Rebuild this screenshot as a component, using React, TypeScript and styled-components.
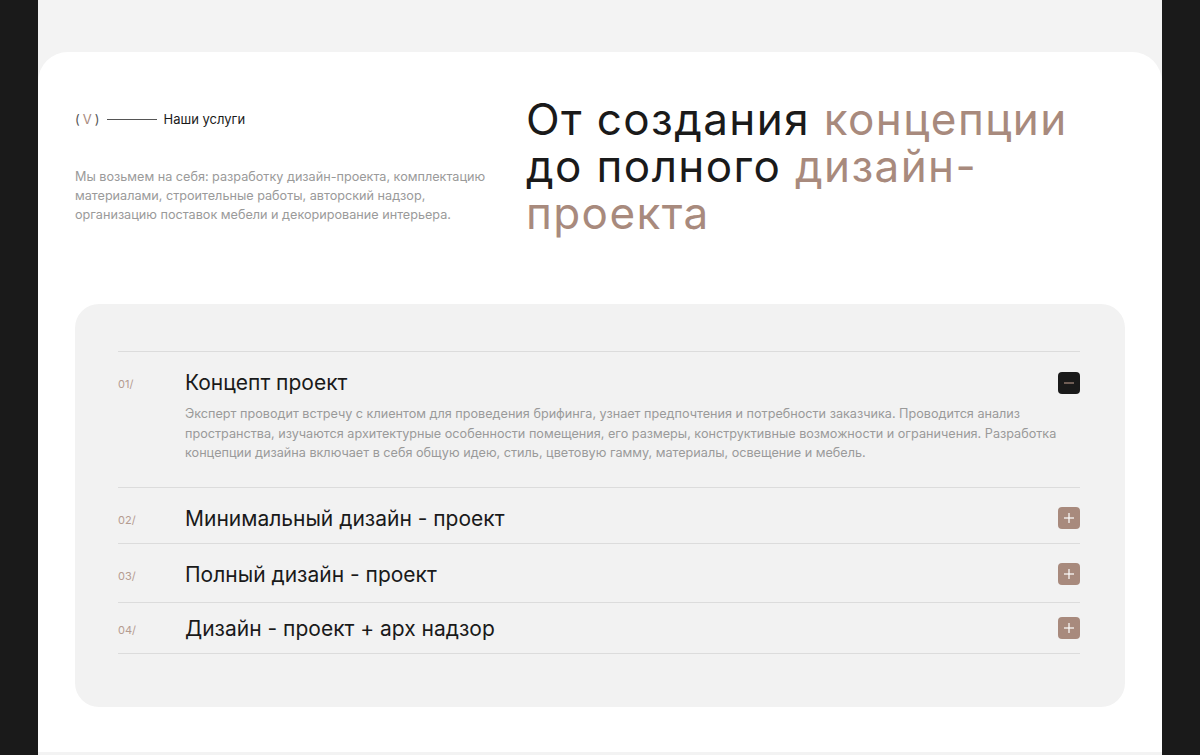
import styled, { createGlobalStyle } from 'styled-components';

const GlobalStyle = createGlobalStyle`
  * { box-sizing: border-box; }
  html, body {
    margin: 0;
    background: #1a1a1a;
    font-family: Inter, "Noto Sans", "Liberation Sans", sans-serif;
    -webkit-font-smoothing: antialiased;
  }
`;

const accent = '#a88a7d';

const Frame = styled.div`
  width: 1124px;
  height: 755px;
  margin: 0 auto;
  padding-top: 52px;
  background: #f3f3f3;
  overflow: hidden;
`;

const Card = styled.section`
  background: #ffffff;
  border-radius: 30px 30px 0 0;
  padding: 44px 37px 0;
  height: 700px;
`;

const Intro = styled.div`
  display: grid;
  grid-template-columns: 451px 1fr;
`;

const LeftCol = styled.div`
  padding-top: 15px;
`;

const Label = styled.div`
  display: flex;
  align-items: center;
  font-size: 13px;
  color: #1a1a1a;
`;

const Mark = styled.span`
  color: #555;
  letter-spacing: 3px;
  span {
    color: ${accent};
  }
`;

const Rule = styled.span`
  width: 50px;
  height: 1px;
  background: #555;
  margin: 0 6px 0 5px;
`;

const Lead = styled.p`
  margin: 40px 0 0;
  white-space: nowrap;
  font-size: 12.65px;
  line-height: 19px;
  color: #9a9a9a;
`;

const Heading = styled.h2`
  margin: 0;
  font-size: 44px;
  font-weight: 400;
  line-height: 47px;
  letter-spacing: 1.4px;
  color: #1a1a1a;
  span {
    color: ${accent};
  }
`;

const Panel = styled.div`
  margin-top: 67px;
  background: #f2f2f2;
  border-radius: 24px;
  padding: 47px 45px 53px 43px;
`;

const Item = styled.div<{ $pad: string }>`
  display: grid;
  grid-template-columns: 67px 1fr 22px;
  align-items: center;
  border-top: 1px solid #dcdcdc;
  padding: ${(p) => p.$pad};
  &:last-child {
    border-bottom: 1px solid #dcdcdc;
  }
`;

const Num = styled.span`
  padding-top: 3px;
  font-size: 11px;
  color: #b59c91;
`;

const Title = styled.h3`
  margin: 0;
  font-size: 21px;
  font-weight: 400;
  color: #1a1a1a;
`;

const Toggle = styled.button<{ $open?: boolean }>`
  width: 22px;
  height: 22px;
  padding: 0;
  border: none;
  border-radius: 4px;
  display: flex;
  align-items: center;
  justify-content: center;
  background: ${(p) => (p.$open ? '#1a1a1a' : accent)};
  color: ${(p) => (p.$open ? accent : '#ffffff')};
`;

const Desc = styled.p`
  grid-column: 2 / 4;
  margin: 9px 0 0;
  font-size: 12.65px;
  line-height: 19.5px;
  color: #9a9a9a;
`;

const items = [
  {
    n: '01/',
    title: 'Концепт проект',
    open: true,
    pad: '18px 0 24px',
    text: 'Эксперт проводит встречу с клиентом для проведения брифинга, узнает предпочтения и потребности заказчика. Проводится анализ пространства, изучаются архитектурные особенности помещения, его размеры, конструктивные возможности и ограничения. Разработка концепции дизайна включает в себя общую идею, стиль, цветовую гамму, материалы, освещение и мебель.',
  },
  { n: '02/', title: 'Минимальный дизайн - проект', pad: '18px 0 12px' },
  { n: '03/', title: 'Полный дизайн - проект', pad: '18px 0 15px' },
  { n: '04/', title: 'Дизайн - проект + арх надзор', pad: '13px 0 12px' },
];

function Icon({ open }: { open?: boolean }) {
  return (
    <svg width="12" height="12" viewBox="0 0 12 12" fill="none">
      <path d="M1 6h10" stroke="currentColor" strokeWidth="1.2" />
      {!open && <path d="M6 1v10" stroke="currentColor" strokeWidth="1.2" />}
    </svg>
  );
}

function App() {
  return (
    <>
      <GlobalStyle />
      <Frame>
        <Card>
          <Intro>
            <LeftCol>
              <Label>
                <Mark>
                  (<span>V</span>)
                </Mark>
                <Rule />
                Наши услуги
              </Label>
              <Lead>
                Мы возьмем на себя: разработку дизайн-проекта, комплектацию
                <br />
                материалами, строительные работы, авторский надзор,
                <br />
                организацию поставок мебели и декорирование интерьера.
              </Lead>
            </LeftCol>
            <Heading>
              От создания <span>концепции</span>
              <br />
              до полного <span>дизайн-
              <br />
              проекта</span>
            </Heading>
          </Intro>
          <Panel>
            {items.map((item) => (
              <Item key={item.n} $pad={item.pad}>
                <Num>{item.n}</Num>
                <Title>{item.title}</Title>
                <Toggle $open={item.open}>
                  <Icon open={item.open} />
                </Toggle>
                {item.text && <Desc>{item.text}</Desc>}
              </Item>
            ))}
          </Panel>
        </Card>
      </Frame>
    </>
  );
}

export default App;
